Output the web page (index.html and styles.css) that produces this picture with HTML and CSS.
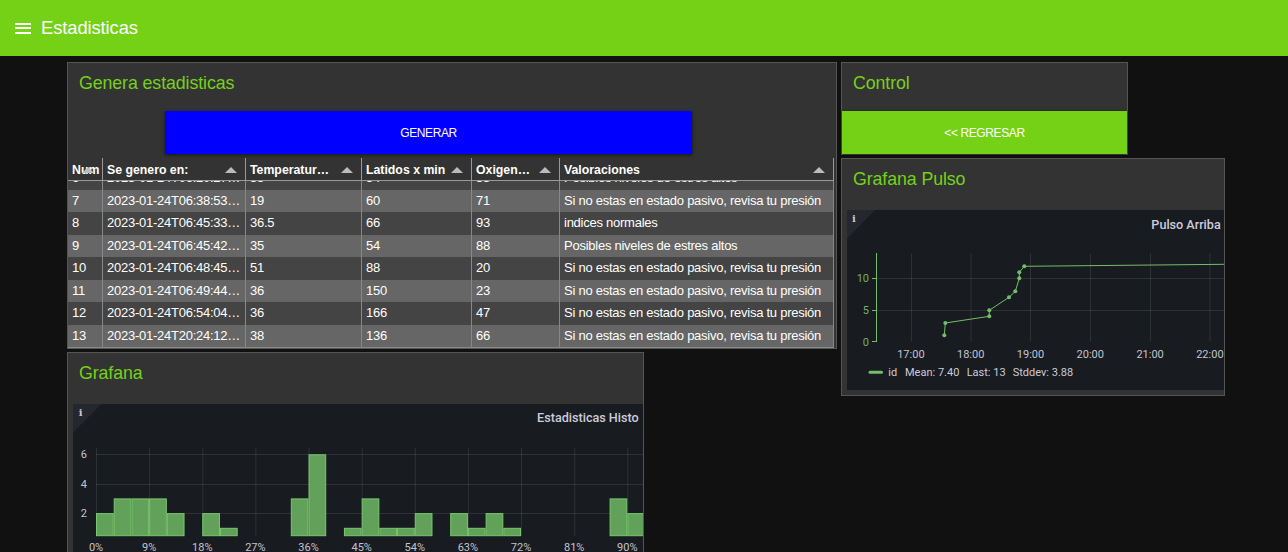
FILE: index.html
```html
<!DOCTYPE html>
<html lang="es">
<head>
<meta charset="utf-8">
<title>Estadisticas</title>
<link rel="stylesheet" href="styles.css">
</head>
<body>
<header class="toolbar">
  <span class="menu-icon"><span></span><span></span><span></span></span>
  <span class="toolbar-title">Estadisticas</span>
</header>
<main class="layout">
  <div class="col col-left">
    <section class="group group-genera">
      <h2 class="group-title">Genera estadisticas</h2>
      <div class="btn-row"><button class="btn btn-blue">GENERAR</button></div>
      <div class="table">
        <div class="thead">
          <div class="th c-num">Num<i class="arrow"></i></div>
          <div class="th c-date">Se genero en:<i class="arrow"></i></div>
          <div class="th c-temp">Temperatur…<i class="arrow"></i></div>
          <div class="th c-lat">Latidos x min<i class="arrow"></i></div>
          <div class="th c-oxi">Oxigen…<i class="arrow"></i></div>
          <div class="th c-val">Valoraciones<i class="arrow"></i></div>
        </div>
        <div class="tbody">
          <div class="tbody-inner">
            <div class="tr"><div class="td c-num">6</div><div class="td c-date">2023-01-24T06:20:27…</div><div class="td c-temp">35</div><div class="td c-lat">54</div><div class="td c-oxi">88</div><div class="td c-val">Posibles niveles de estres altos</div></div>
            <div class="tr"><div class="td c-num">7</div><div class="td c-date">2023-01-24T06:38:53…</div><div class="td c-temp">19</div><div class="td c-lat">60</div><div class="td c-oxi">71</div><div class="td c-val">Si no estas en estado pasivo, revisa tu presión</div></div>
            <div class="tr"><div class="td c-num">8</div><div class="td c-date">2023-01-24T06:45:33…</div><div class="td c-temp">36.5</div><div class="td c-lat">66</div><div class="td c-oxi">93</div><div class="td c-val">indices normales</div></div>
            <div class="tr"><div class="td c-num">9</div><div class="td c-date">2023-01-24T06:45:42…</div><div class="td c-temp">35</div><div class="td c-lat">54</div><div class="td c-oxi">88</div><div class="td c-val">Posibles niveles de estres altos</div></div>
            <div class="tr"><div class="td c-num">10</div><div class="td c-date">2023-01-24T06:48:45…</div><div class="td c-temp">51</div><div class="td c-lat">88</div><div class="td c-oxi">20</div><div class="td c-val">Si no estas en estado pasivo, revisa tu presión</div></div>
            <div class="tr"><div class="td c-num">11</div><div class="td c-date">2023-01-24T06:49:44…</div><div class="td c-temp">36</div><div class="td c-lat">150</div><div class="td c-oxi">23</div><div class="td c-val">Si no estas en estado pasivo, revisa tu presión</div></div>
            <div class="tr"><div class="td c-num">12</div><div class="td c-date">2023-01-24T06:54:04…</div><div class="td c-temp">36</div><div class="td c-lat">166</div><div class="td c-oxi">47</div><div class="td c-val">Si no estas en estado pasivo, revisa tu presión</div></div>
            <div class="tr"><div class="td c-num">13</div><div class="td c-date">2023-01-24T20:24:12…</div><div class="td c-temp">38</div><div class="td c-lat">136</div><div class="td c-oxi">66</div><div class="td c-val">Si no estas en estado pasivo, revisa tu presión</div></div>
          </div>
        </div>
      </div>
    </section>

    <section class="group group-grafana">
      <h2 class="group-title">Grafana</h2>
      <div class="gf-frame gf-histo">
        <svg class="gf-svg" width="570" height="148" viewBox="0 0 570 148">
          <path class="gf-corner" d="M0 0H28.5L0 28.5Z"/>
          <text class="gf-info" x="7.7" y="11.5" text-anchor="middle">i</text>
          <text class="gf-title" x="565.7" y="18" text-anchor="end">Estadisticas Histo</text>
          <g class="gf-grid">
            <line x1="23" y1="50.5" x2="570" y2="50.5"/>
            <line x1="23" y1="80.5" x2="570" y2="80.5"/>
            <line x1="23" y1="109.5" x2="570" y2="109.5"/>
            <line x1="23.5" y1="43.7" x2="23.5" y2="132"/>
            <line x1="76.6" y1="43.7" x2="76.6" y2="132"/>
            <line x1="129.8" y1="43.7" x2="129.8" y2="132"/>
            <line x1="182.9" y1="43.7" x2="182.9" y2="132"/>
            <line x1="236" y1="43.7" x2="236" y2="132"/>
            <line x1="289.2" y1="43.7" x2="289.2" y2="132"/>
            <line x1="342.3" y1="43.7" x2="342.3" y2="132"/>
            <line x1="395.4" y1="43.7" x2="395.4" y2="132"/>
            <line x1="448.5" y1="43.7" x2="448.5" y2="132"/>
            <line x1="501.7" y1="43.7" x2="501.7" y2="132"/>
            <line x1="554.8" y1="43.7" x2="554.8" y2="132"/>
          </g>
          <g class="gf-ylabels">
            <text x="14" y="54.3" text-anchor="end">6</text>
            <text x="14" y="84.3" text-anchor="end">4</text>
            <text x="14" y="113.3" text-anchor="end">2</text>
          </g>
          <g class="gf-bars">
            <rect x="23.5" y="109.6" width="16.7" height="22.1"/>
            <rect x="41.21" y="94.9" width="16.7" height="36.8"/>
            <rect x="58.92" y="94.9" width="16.7" height="36.8"/>
            <rect x="76.63" y="94.9" width="16.7" height="36.8"/>
            <rect x="94.34" y="109.6" width="16.7" height="22.1"/>
            <rect x="129.76" y="109.6" width="16.7" height="22.1"/>
            <rect x="147.47" y="124.3" width="16.7" height="7.4"/>
            <rect x="218.31" y="94.9" width="16.7" height="36.8"/>
            <rect x="236.02" y="50.8" width="16.7" height="80.9"/>
            <rect x="271.44" y="124.3" width="16.7" height="7.4"/>
            <rect x="289.15" y="94.9" width="16.7" height="36.8"/>
            <rect x="306.86" y="124.3" width="16.7" height="7.4"/>
            <rect x="324.57" y="124.3" width="16.7" height="7.4"/>
            <rect x="342.28" y="109.6" width="16.7" height="22.1"/>
            <rect x="377.7" y="109.6" width="16.7" height="22.1"/>
            <rect x="395.41" y="124.3" width="16.7" height="7.4"/>
            <rect x="413.12" y="109.6" width="16.7" height="22.1"/>
            <rect x="430.83" y="124.3" width="16.7" height="7.4"/>
            <rect x="537.09" y="94.9" width="16.7" height="36.8"/>
            <rect x="554.8" y="109.6" width="16.7" height="22.1"/>
          </g>
          <g class="gf-xlabels">
            <text x="23" y="146.7" text-anchor="middle">0%</text>
            <text x="76.1" y="146.7" text-anchor="middle">9%</text>
            <text x="129.3" y="146.7" text-anchor="middle">18%</text>
            <text x="182.4" y="146.7" text-anchor="middle">27%</text>
            <text x="235.5" y="146.7" text-anchor="middle">36%</text>
            <text x="288.7" y="146.7" text-anchor="middle">45%</text>
            <text x="341.8" y="146.7" text-anchor="middle">54%</text>
            <text x="394.9" y="146.7" text-anchor="middle">63%</text>
            <text x="448" y="146.7" text-anchor="middle">72%</text>
            <text x="501.2" y="146.7" text-anchor="middle">81%</text>
            <text x="554.3" y="146.7" text-anchor="middle">90%</text>
          </g>
        </svg>
      </div>
    </section>
  </div>

  <div class="col col-right">
    <section class="group group-control">
      <h2 class="group-title">Control</h2>
      <button class="btn btn-green">&lt;&lt; REGRESAR</button>
    </section>

    <section class="group group-pulso">
      <h2 class="group-title">Grafana Pulso</h2>
      <div class="gf-frame gf-pulso">
        <svg class="gf-svg" width="377" height="180" viewBox="0 0 377 180">
          <path class="gf-corner" d="M0 0H28L0 29Z"/>
          <text class="gf-info" x="7" y="11.5" text-anchor="middle">i</text>
          <text class="gf-title" x="373.7" y="19" text-anchor="end">Pulso Arriba</text>
          <g class="gf-grid">
            <line x1="29.5" y1="100.5" x2="377" y2="100.5"/>
            <line x1="29.5" y1="68.5" x2="377" y2="68.5"/>
            <line x1="64.5" y1="43.5" x2="64.5" y2="131.5"/>
            <line x1="124" y1="43.5" x2="124" y2="131.5"/>
            <line x1="183.5" y1="43.5" x2="183.5" y2="131.5"/>
            <line x1="243.5" y1="43.5" x2="243.5" y2="131.5"/>
            <line x1="303.5" y1="43.5" x2="303.5" y2="131.5"/>
            <line x1="363" y1="43.5" x2="363" y2="131.5"/>
          </g>
          <g class="gf-yaxis">
            <line x1="29.5" y1="43" x2="29.5" y2="132"/>
            <line x1="25" y1="131.5" x2="29.5" y2="131.5"/>
            <line x1="25" y1="100.5" x2="29.5" y2="100.5"/>
            <line x1="25" y1="68.5" x2="29.5" y2="68.5"/>
          </g>
          <g class="gf-ylabels gf-ylabels-green">
            <text x="22" y="72.3" text-anchor="end">10</text>
            <text x="22" y="104.3" text-anchor="end">5</text>
            <text x="22" y="135.7" text-anchor="end">0</text>
          </g>
          <g class="gf-xlabels">
            <text x="63.9" y="148.3" text-anchor="middle">17:00</text>
            <text x="123.7" y="148.3" text-anchor="middle">18:00</text>
            <text x="183.5" y="148.3" text-anchor="middle">19:00</text>
            <text x="243.3" y="148.3" text-anchor="middle">20:00</text>
            <text x="303.1" y="148.3" text-anchor="middle">21:00</text>
            <text x="362.9" y="148.3" text-anchor="middle">22:00</text>
          </g>
          <polyline class="gf-line" points="97.3,125.3 98.3,113 142.3,106.3 142.3,100.3 162,87.3 168.3,81.3 172.3,68.3 172.3,62.3 177.3,56.3 377,54.3"/>
          <g class="gf-points">
            <circle cx="97.3" cy="125.3" r="2"/>
            <circle cx="98.3" cy="113" r="2"/>
            <circle cx="142.3" cy="106.3" r="2"/>
            <circle cx="142.3" cy="100.3" r="2"/>
            <circle cx="162" cy="87.3" r="2"/>
            <circle cx="168.3" cy="81.3" r="2"/>
            <circle cx="172.3" cy="68.3" r="2"/>
            <circle cx="172.3" cy="62.3" r="2"/>
            <circle cx="177.3" cy="56.3" r="2"/>
          </g>
          <line class="gf-legend-mark" x1="23" y1="162.3" x2="34.5" y2="162.3"/>
          <g class="gf-legend">
            <text x="41.3" y="166.3">id</text>
            <text x="58" y="166.3">Mean: 7.40</text>
            <text x="119.7" y="166.3">Last: 13</text>
            <text x="165.7" y="166.3">Stddev: 3.88</text>
          </g>
        </svg>
      </div>
    </section>
  </div>
</main>
</body>
</html>
```

FILE: styles.css
```css
* { box-sizing: border-box; }

html, body {
  margin: 0;
  height: 100%;
  overflow: hidden;
  background: #111111;
}

body {
  font-family: "Liberation Sans", Arial, sans-serif;
  color: #fff;
}

/* Toolbar */
.toolbar {
  height: 56px;
  background: #74d115;
  display: flex;
  align-items: center;
  padding-left: 15px;
}

.menu-icon {
  display: flex;
  flex-direction: column;
  gap: 2.5px;
  width: 16px;
  margin-right: 10px;
}

.menu-icon span {
  display: block;
  height: 2px;
  background: #fff;
}

.toolbar-title {
  font-size: 18.4px;
  letter-spacing: -0.1px;
  color: #fff;
}

/* Layout */
.layout {
  display: flex;
  align-items: flex-start;
  gap: 4px;
  padding: 6px 0 0 67px;
}

.col {
  display: flex;
  flex-direction: column;
  align-items: flex-start;
  gap: 3px;
}

/* Groups */
.group {
  background: #333333;
  border: 1px solid #555555;
}

.group-title {
  margin: 0;
  height: 48px;
  line-height: 41px;
  padding-left: 11px;
  font-size: 17.8px;
  letter-spacing: -0.1px;
  font-weight: normal;
  color: #75d11a;
  white-space: nowrap;
}

.group-genera { width: 770px; height: 287px; }
.group-grafana { width: 577px; border-bottom: 0; }
.group-control { width: 287px; }
.group-pulso { width: 384px; padding-bottom: 5px; }

/* Buttons */
.btn-row {
  height: 43px;
  padding-left: 97px;
}

.btn {
  display: block;
  height: 43px;
  border: 0;
  padding: 0;
  color: #fff;
  font-family: "Liberation Sans", Arial, sans-serif;
  font-size: 12px;
  letter-spacing: -0.4px;
  box-shadow: 0 1px 3px rgba(0, 0, 0, 0.6);
  cursor: pointer;
}

.btn-blue { width: 527px; background: #0000ff; }
.btn-green { width: 285px; background: #74d115; }

/* Table */
.table {
  margin-top: 4px;
  width: 766px;
  height: 190px;
  border-bottom: 1px solid #8a8a8a;
}

.thead {
  display: flex;
  height: 23px;
  background: #333333;
  border-bottom: 1px solid #999999;
}

.th {
  position: relative;
  height: 22px;
  padding: 2px 4px 0;
  line-height: 21px;
  font-size: 12.3px;
  font-weight: bold;
  white-space: nowrap;
  overflow: hidden;
  border-right: 1px solid #999999;
}

.arrow {
  position: absolute;
  top: 9px;
  right: 8px;
  width: 0;
  height: 0;
  border-left: 6px solid transparent;
  border-right: 6px solid transparent;
  border-bottom: 6px solid #bbbbbb;
}

.tbody {
  height: 166px;
  overflow: hidden;
}

.tbody-inner { margin-top: -13.67px; }

.tr {
  display: flex;
  height: 22.5px;
}

.tr:nth-child(odd) { background: #444444; }
.tr:nth-child(even) { background: #666666; }

.td {
  padding: 0 4px;
  line-height: 22.5px;
  font-size: 13px;
  letter-spacing: -0.25px;
  white-space: nowrap;
  overflow: hidden;
  border-right: 1px solid #888888;
}

.c-num { width: 35px; }
.c-date { width: 143px; }
.c-temp { width: 116px; }
.c-lat { width: 110px; }
.c-oxi { width: 88px; }
.c-val { width: 274px; }

/* Grafana frames */
.gf-frame {
  margin: 3px 0 0 5px;
  background: #181b1f;
}

.gf-histo { width: 570px; height: 148px; }
.gf-pulso { width: 377px; height: 180px; }

.gf-svg { display: block; font-family: Roboto, "Liberation Sans", sans-serif; }

.gf-corner { fill: #24272d; }

.gf-info {
  font-family: "DejaVu Serif", serif;
  font-weight: bold;
  font-size: 10px;
  fill: #c8c8d2;
}

.gf-title {
  font-size: 12.6px;
  font-weight: 500;
  fill: #ccccdc;
}

.gf-grid line {
  stroke: rgba(204, 204, 220, 0.12);
  stroke-width: 1;
}

.gf-ylabels text,
.gf-xlabels text {
  font-size: 11px;
  fill: #c4c4cf;
}

.gf-ylabels-green text { fill: #6fb364; }

.gf-yaxis line {
  stroke: #73bf69;
  stroke-width: 1;
}

.gf-bars rect {
  fill: #62a159;
  stroke: #78c86d;
  stroke-width: 1;
}

.gf-line {
  fill: none;
  stroke: #73bf69;
  stroke-width: 1;
}

.gf-points circle { fill: #73bf69; }

.gf-legend-mark {
  stroke: #73bf69;
  stroke-width: 3;
  stroke-linecap: round;
}

.gf-legend text {
  font-size: 11px;
  fill: #ccccdc;
}
```
